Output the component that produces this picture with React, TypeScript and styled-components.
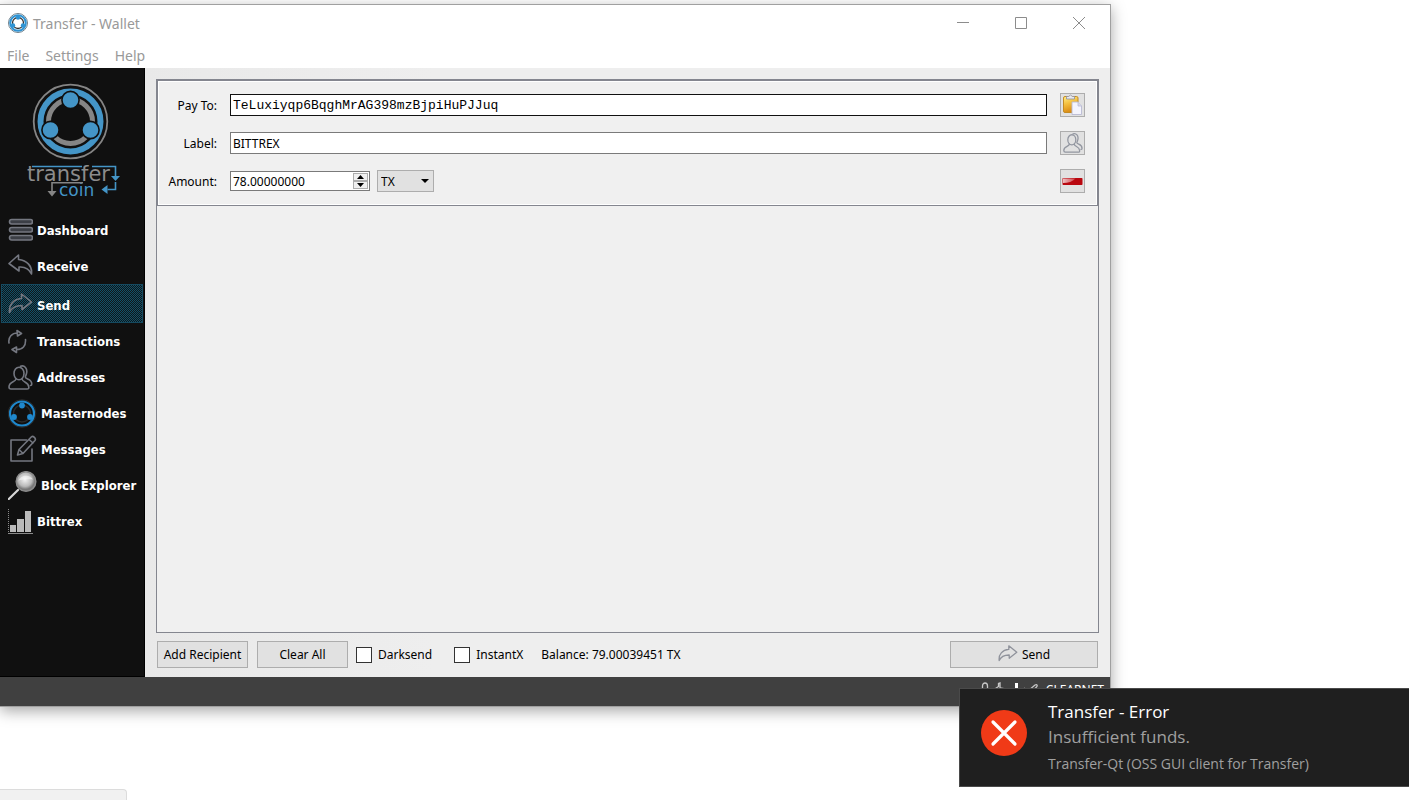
import React from "react";
import styled, { createGlobalStyle, css } from "styled-components";

const navFont = `"DejaVu Sans Condensed", "Noto Sans", sans-serif`;
const shellFont = `"Noto Sans", "Open Sans", sans-serif`;
const toastFont = `"Open Sans", "Noto Sans", sans-serif`;

const GlobalStyle = createGlobalStyle`
  *, *::before, *::after { box-sizing: border-box; }
  body { margin: 0; background: #fff; overflow: hidden; }
  button, input, select { font: inherit; color: inherit; margin: 0; }
`;

const Desktop = styled.div`
  position: relative;
  height: 100vh;
  padding-top: 4px;
  overflow: hidden;
  display: flex;
  flex-direction: column;
  justify-content: space-between;
  align-items: flex-start;
  font-family: ${shellFont};
  font-size: 12px;
  color: #000;
`;

const AppWindow = styled.div`
  width: calc(100% - 298px);
  height: calc(100vh - 97px);
  display: flex;
  flex-direction: column;
  border: 1px solid #a0a0a0;
  border-left: 0;
  background: #fff;
  box-shadow: 0 4px 14px rgba(0, 0, 0, 0.35);
`;

const TitleBar = styled.header`
  display: flex;
  align-items: center;
  height: 36px;
  flex: none;
  padding: 0 2px 0 8px;
  gap: 5px;
  font-size: 14px;
  color: #999;
`;

const WindowTitle = styled.h1`
  margin: 0;
  flex: 1;
  font-size: inherit;
  font-weight: 400;
`;

const CaptionButton = styled.button`
  width: 58px;
  height: 36px;
  padding: 0;
  border: 0;
  background: none;
  display: grid;
  place-items: center;
`;

const CaptionButtons = styled.div`
  display: flex;
`;

const MenuBar = styled.nav`
  display: flex;
  gap: 16px;
  height: 27px;
  flex: none;
  align-items: center;
  padding: 2px 0 0 7px;
  font-size: 14px;
`;

const MenuButton = styled.button`
  padding: 0;
  border: 0;
  background: none;
  color: #999;
`;

const Body = styled.div`
  flex: 1;
  min-height: 0;
  display: flex;
  background: #eee;
`;

const Sidebar = styled.aside`
  width: 145px;
  flex: none;
  background: #101010;
  border-right: 1px solid #000;
  border-bottom: 1px solid #000;
`;

const Brand = styled.div`
  height: 144px;
  svg { display: block; }
`;

const NavLink = styled.a<{ $active?: boolean }>`
  display: flex;
  align-items: center;
  height: ${(p) => (p.$active ? 39 : 36)}px;
  margin: 0 1px;
  padding-left: 7px;
  gap: 4px;
  font-family: ${navFont};
  font-size: 13px;
  font-weight: 700;
  color: #fff;
  text-decoration: none;
  white-space: nowrap;
  svg { flex: none; }
  ${(p) =>
    p.$active &&
    css`
      padding: 3px 0 0 6px;
      border: 1px solid #15495f;
      background: conic-gradient(#115069 25%, #101618 0 50%, #115069 0 75%, #101618 0) 0 0 / 2px 2px;
    `}
`;

const Main = styled.main`
  flex: 1;
  min-width: 0;
  display: flex;
  flex-direction: column;
  padding: 11px 11px 9px;
  background: linear-gradient(90deg, #e9e9e9, #eee 30%);
`;

const RecipientList = styled.section`
  flex: 1;
  min-height: 0;
  border: 1px solid #84868f;
  background: #f0f0f0;
`;

const Entry = styled.form`
  display: grid;
  grid-template-columns: 48px 1fr 25px;
  grid-auto-rows: 24px;
  gap: 14px 13px;
  padding: 12px 12px 12px 11px;
  align-items: center;
  border: 1px solid #84868f;
  box-shadow: inset 0 0 0 1px #fff;
`;

const FieldLabel = styled.label`
  justify-self: end;
  white-space: nowrap;
`;

const TextField = styled.input<{ $mono?: boolean }>`
  width: 100%;
  height: 22px;
  padding: 0 2px;
  border: 1px solid ${(p) => (p.$mono ? "#111" : "#7a7a7a")};
  border-radius: 0;
  outline: 0;
  background: #fff;
  ${(p) => p.$mono && `font-family: "Liberation Mono", monospace; font-size: 13px;`}
`;

const AmountRow = styled.div`
  display: flex;
  align-items: center;
  gap: 7px;
`;

const SpinBox = styled.div`
  display: flex;
  align-items: center;
  width: 140px;
  height: 20px;
  padding-right: 1px;
  border: 1px solid #7a7a7a;
  background: #fff;
`;

const SpinInput = styled.input`
  flex: 1;
  min-width: 0;
  height: 18px;
  padding: 0 2px;
  border: 0;
  outline: 0;
  background: none;
`;

const SpinButtons = styled.div`
  display: flex;
  flex-direction: column;
`;

const SpinButton = styled.button`
  width: 15px;
  height: 8px;
  padding: 0;
  border: 1px solid #adadad;
  background: #f0f0f0;
  display: grid;
  place-items: center;
`;

const UnitSelect = styled.span`
  position: relative;
  display: flex;
  align-items: center;
  select {
    appearance: none;
    width: 57px;
    height: 22px;
    padding: 0 3px;
    border: 1px solid #adadad;
    border-radius: 0;
    background: #e1e1e1;
  }
  svg {
    position: absolute;
    right: 5px;
    pointer-events: none;
  }
`;

const IconButton = styled.button`
  width: 25px;
  height: 24px;
  padding: 0;
  border: 1px solid #adadad;
  background: #e1e1e1;
  display: grid;
  place-items: center;
`;

const Actions = styled.div`
  display: flex;
  align-items: center;
  flex: none;
  padding: 8px 1px 0;
`;

const PushButton = styled.button<{ $wide?: boolean }>`
  width: ${(p) => (p.$wide ? 148 : 91)}px;
  height: 27px;
  margin-right: ${(p) => (p.$wide ? 0 : 9)}px;
  margin-left: ${(p) => (p.$wide ? "auto" : 0)};
  padding: 0;
  border: 1px solid #adadad;
  background: #e1e1e1;
  display: flex;
  align-items: center;
  justify-content: center;
  gap: 4px;
  white-space: nowrap;
`;

const Checks = styled.div`
  display: flex;
  gap: 22px;
  margin: 0 18px 0 -1px;
`;

const CheckLabel = styled.label`
  display: flex;
  align-items: center;
  gap: 6px;
  input {
    appearance: none;
    width: 16px;
    height: 16px;
    border: 1px solid #333;
    background: #fff;
  }
`;

const StatusBar = styled.footer`
  display: flex;
  align-items: center;
  justify-content: flex-end;
  gap: 6px;
  flex: none;
  height: 29px;
  padding: 0 6px 4px 0;
  background: #404040;
  color: #fff;
`;

const Toast = styled.aside`
  position: absolute;
  right: 0;
  bottom: 13px;
  width: 450px;
  height: 99px;
  display: flex;
  gap: 21px;
  padding: 10px 0 0 21px;
  border: 1px solid #4a4a4a;
  border-right: 0;
  background: #1f1f1f;
  font-family: ${toastFont};
  color: #a0a0a0;
  svg { flex: none; margin-top: 11px; }
`;

const ToastText = styled.div`
  p { margin: 0; white-space: nowrap; }
`;

const ToastLine = styled.p<{ $title?: boolean }>`
  font-size: 17px;
  line-height: 25px;
  color: ${(p) => (p.$title ? "#fff" : "#a0a0a0")};
`;

const ToastSource = styled.p`
  font-size: 14px;
  line-height: 29px;
`;

const HoverTab = styled.div`
  width: 127px;
  height: 11px;
  border: 1px solid #dcdcdc;
  border-width: 1px 1px 0 0;
  border-top-right-radius: 4px;
  background: #f1f1f1;
`;

const ringNodes = [
  [0, -21.5],
  [-20, 8.5],
  [20, 8.5],
];

const BrandLogo = () => (
  <svg width="144" height="144" viewBox="0 68 144 144" role="img" aria-label="transfer coin">
    <g transform="translate(70.500 121.500)" fill="none">
      <circle r="36.800" stroke="#858585" strokeWidth="1.800" />
      <circle r="30" stroke="#4495c7" strokeWidth="6" />
      <circle r="22" stroke="#858585" strokeWidth="5" />
      {ringNodes.map(([x, y]) => (
        <circle key={x} cx={x} cy={y} r="8.600" fill="#4495c7" stroke="#101010" strokeWidth="1.600" />
      ))}
    </g>
    <text x="27" y="181" fontFamily="DejaVu Sans" fontSize="21" fill="#8c8c8c">transfer</text>
    <text x="59" y="196" fontFamily="DejaVu Sans" fontSize="17" fill="#4495c7">coin</text>
    <path d="M32 166.500H82M92 166.500H115.500V176" fill="none" stroke="#4495c7" strokeWidth="1.600" />
    <path d="M111 176h9l-4.500 5z" fill="#4495c7" />
    <path d="M115.500 182v7.500h-8" fill="none" stroke="#4495c7" strokeWidth="1.600" />
    <path d="M107.500 185v9l-6-4.500z" fill="#4495c7" />
    <path d="M83 182.700H52v9" fill="none" stroke="#858585" strokeWidth="1.600" />
    <path d="M47.500 191h9l-4.500 5.500z" fill="#858585" />
  </svg>
);

const line = {
  fill: "none",
  stroke: "#747780",
  strokeWidth: 1.6,
  strokeLinejoin: "round" as const,
  strokeLinecap: "round" as const,
};

const DashboardIcon = () => (
  <svg width="25" height="24" viewBox="0 0 25 24" {...line}>
    {[1.5, 9.5, 17.5].map((y) => (
      <rect key={y} x="1.500" y={y} width="23" height="4.500" rx="2.200" fill="#3c3f46" />
    ))}
  </svg>
);

const ForwardArrow = ({ size = 25 }: { size?: number }) => (
  <svg width={size} height={size} viewBox="0 0 25 25" {...line} stroke={size < 25 ? "#8f929b" : "#747780"}>
    <path d="M13.500 1L23.500 9L14 16.500V12.500C8 12.500 3.500 14.500 1.500 19.500C0.500 12 5.500 6 13.500 5.500Z" />
  </svg>
);

const BackArrow = () => (
  <svg width="25" height="25" viewBox="0 0 25 25" {...line}>
    <path d="M10.500 1L1 9.500L11 17V13C17 12.500 21 14.500 23.500 20C24.500 12 19 6.500 10.500 5.500Z" />
  </svg>
);

const CycleIcon = () => (
  <svg width="25" height="25" viewBox="0 0 25 25" {...line}>
    <path d="M1 14C0 8 4 4 9.500 4M9 1.500L13.500 4.500L9.500 7ZM17.500 10.500C18 17 14.500 20.500 9 20.500M8.500 18L4 20.500L8.500 23.500Z" />
  </svg>
);

const PeopleIcon = ({ size = 25, color = "#747780" }: { size?: number; color?: string }) => (
  <svg width={size} height={size} viewBox="0 0 25 25" {...line} stroke={color}>
    <ellipse cx="11" cy="8.500" rx="5" ry="6.300" />
    <path d="M8 14C7.500 17.500 1 16 1 22C1 23.500 1.500 24 3 24H19C20.500 24 21 23.500 20.800 22C20.500 16.500 14.500 17.500 14 14" />
    <path d="M12.500 1.200C16.500 -0.200 19.800 3.500 18.500 8.500C18.200 10 17.500 11 17.300 12C17.500 14.500 23.800 13.500 23.800 19C23.800 20 23.500 20.500 22.500 20.500" />
  </svg>
);

const MasternodeIcon = () => (
  <svg width="29" height="29" viewBox="0 0 29 29" fill="none">
    <circle cx="14" cy="14.500" r="13.800" stroke="#2d2d2d" />
    <circle cx="14" cy="14.500" r="12" stroke="#1f88cd" strokeWidth="2.200" />
    <circle cx="14" cy="14.500" r="8.500" stroke="#2b2b2b" strokeWidth="1.500" />
    <circle cx="14" cy="6.500" r="2.900" fill="#1f88cd" />
    <circle cx="6" cy="18" r="2.900" fill="#1f88cd" />
    <circle cx="22" cy="18" r="2.900" fill="#1f88cd" />
  </svg>
);

const ComposeIcon = () => (
  <svg width="29" height="29" viewBox="0 0 29 29" {...line}>
    <path d="M18.500 5H3V26H24V14" />
    <path d="M9.500 20L11 14.500L23.500 1.800C25 0.500 28.500 3.500 27 5.500L15 18.500ZM21 4.500L25 8M11 14.500L15 18.500" />
  </svg>
);

const MagnifierIcon = () => (
  <svg width="29" height="29" viewBox="0 0 29 29">
    <defs>
      <radialGradient id="lens" cx="45%" cy="40%">
        <stop offset="0" stopColor="#f4f4f4" />
        <stop offset="0.700" stopColor="#b9b9b9" />
        <stop offset="1" stopColor="#777" />
      </radialGradient>
    </defs>
    <path d="M0.800 28L10 19" stroke="#d6d6d6" strokeWidth="2.200" strokeLinecap="round" />
    <circle cx="18" cy="10.500" r="9.800" fill="url(#lens)" stroke="#8b8b8b" strokeWidth="1.500" />
    <path d="M10.500 9.500C12.500 3.500 22.500 3 25 8.500C20.500 8 14.500 8.500 10.500 9.500Z" fill="#fff" opacity="0.500" />
  </svg>
);

const ChartIcon = () => (
  <svg width="25" height="27" viewBox="0 0 25 27">
    <path d="M0.500 1V25.500" stroke="#8a8a8a" strokeDasharray="1 1" />
    <path d="M0 25.500H25" stroke="#8a8a8a" />
    <path d="M2 17h6v7H2zM9 11h7v13H9zM17 3h6v21h-6z" fill="#bababa" />
  </svg>
);

const PasteIcon = () => (
  <svg width="21" height="22" viewBox="0 0 21 22">
    <defs>
      <linearGradient id="board" x2="0.300" y2="1">
        <stop offset="0" stopColor="#fff08a" />
        <stop offset="0.500" stopColor="#f3bd3d" />
        <stop offset="1" stopColor="#d98a14" />
      </linearGradient>
    </defs>
    <rect x="1.500" y="2.500" width="14.500" height="16" rx="1.500" fill="url(#board)" stroke="#c38b24" />
    <path d="M4.500 5V2.500H6.500Q8.500 -0.500 10.500 2.500H12.500V5Z" fill="#e8e8ee" stroke="#8b8fa0" strokeWidth="0.800" />
    <path d="M10 8H16L19.500 12V20.500H10Z" fill="#f4f4fd" stroke="#b9bad2" strokeWidth="0.900" />
    <path d="M16 8V12H19.500" fill="#d8d8ea" stroke="#b9bad2" strokeWidth="0.800" />
  </svg>
);

const RemoveIcon = () => (
  <svg width="21" height="9" viewBox="0 0 21 9">
    <defs>
      <linearGradient id="gloss">
        <stop offset="0" stopColor="#ecc0c2" />
        <stop offset="1" stopColor="#cf4248" />
      </linearGradient>
    </defs>
    <rect x="0.500" y="1" width="20" height="7" rx="0.800" fill="#b9070f" />
    <path d="M1 1.500H13.500Q9 6 1 6Z" fill="url(#gloss)" />
  </svg>
);

const Triangle = ({ up, w = 7, h = 4 }: { up?: boolean; w?: number; h?: number }) => (
  <svg width={w} height={h} viewBox={`0 0 ${w} ${h}`}>
    <path d={up ? `M0 ${h}L${w / 2} 0L${w} ${h}Z` : `M0 0H${w}L${w / 2} ${h}Z`} fill="#000" />
  </svg>
);

const StatusIcons = () => (
  <svg width="60" height="16" viewBox="0 0 60 16" fill="none" stroke="#c8c8c8" strokeWidth="1.300">
    <path d="M2.500 8V4C2.500 0 7.500 0 7.500 4V8M1 8h8v7H1z" />
    <path d="M14 7.500L18.500 4.500V1.500L20 1V6L23 6.500L19 13V9" />
    <path d="M32 15V10" strokeWidth="2.500" />
    <path d="M36.500 15V1" strokeWidth="3" stroke="#fff" />
    <path d="M44 6L48 9L55 3C57 2 58 3.500 56.500 5L49 13L43 8" />
  </svg>
);

const navItems = [
  { label: "Dashboard", icon: <DashboardIcon /> },
  { label: "Receive", icon: <BackArrow /> },
  { label: "Send", icon: <ForwardArrow />, active: true },
  { label: "Transactions", icon: <CycleIcon /> },
  { label: "Addresses", icon: <PeopleIcon /> },
  { label: "Masternodes", icon: <MasternodeIcon /> },
  { label: "Messages", icon: <ComposeIcon /> },
  { label: "Block Explorer", icon: <MagnifierIcon /> },
  { label: "Bittrex", icon: <ChartIcon /> },
];

export default function App() {
  return (
    <Desktop>
      <GlobalStyle />
      <AppWindow>
        <TitleBar>
          <svg width="20" height="20" viewBox="0 0 20 20" aria-hidden="true">
            <circle cx="10" cy="10" r="9.500" fill="#fff" stroke="#6f7f8a" />
            <circle cx="10" cy="10" r="7.800" fill="none" stroke="#2f93d3" strokeWidth="2" />
            <circle cx="10" cy="10" r="5.500" fill="#fff" stroke="#333" strokeWidth="1.300" />
            <circle cx="10" cy="4.500" r="2.200" fill="#2f93d3" />
            <circle cx="5" cy="12.500" r="2.200" fill="#2f93d3" />
            <circle cx="15" cy="12.500" r="2.200" fill="#2f93d3" />
          </svg>
          <WindowTitle>Transfer - Wallet</WindowTitle>
          <CaptionButtons>
            <CaptionButton aria-label="Minimize">
              <svg width="12" height="12" viewBox="0 0 12 12" stroke="#8c8c8c"><path d="M0 5.500H12" /></svg>
            </CaptionButton>
            <CaptionButton aria-label="Maximize">
              <svg width="12" height="12" viewBox="0 0 12 12" fill="none" stroke="#8c8c8c"><path d="M0.500 0.500H11.500V11.500H0.500Z" /></svg>
            </CaptionButton>
            <CaptionButton aria-label="Close">
              <svg width="12" height="12" viewBox="0 0 12 12" stroke="#8c8c8c"><path d="M0 0L12 12M12 0L0 12" /></svg>
            </CaptionButton>
          </CaptionButtons>
        </TitleBar>
        <MenuBar>
          <MenuButton>File</MenuButton>
          <MenuButton>Settings</MenuButton>
          <MenuButton>Help</MenuButton>
        </MenuBar>
        <Body>
          <Sidebar>
            <Brand><BrandLogo /></Brand>
            <nav>
              {navItems.map((item) => (
                <NavLink key={item.label} href="#" $active={item.active}>
                  {item.icon}
                  {item.label}
                </NavLink>
              ))}
            </nav>
          </Sidebar>
          <Main>
            <RecipientList>
              <Entry onSubmit={(e) => e.preventDefault()}>
                <FieldLabel htmlFor="payto">Pay To:</FieldLabel>
                <TextField id="payto" $mono spellCheck={false} defaultValue="TeLuxiyqp6BqghMrAG398mzBjpiHuPJJuq" />
                <IconButton type="button" aria-label="Paste address"><PasteIcon /></IconButton>
                <FieldLabel htmlFor="label">Label:</FieldLabel>
                <TextField id="label" spellCheck={false} defaultValue="BITTREX" />
                <IconButton type="button" aria-label="Choose from address book"><PeopleIcon size={20} color="#9296a0" /></IconButton>
                <FieldLabel htmlFor="amount">Amount:</FieldLabel>
                <AmountRow>
                  <SpinBox>
                    <SpinInput id="amount" defaultValue="78.00000000" />
                    <SpinButtons>
                      <SpinButton type="button" aria-label="Increase"><Triangle up /></SpinButton>
                      <SpinButton type="button" aria-label="Decrease"><Triangle /></SpinButton>
                    </SpinButtons>
                  </SpinBox>
                  <UnitSelect>
                    <select aria-label="Unit" defaultValue="TX"><option>TX</option></select>
                    <Triangle w={8} h={4} />
                  </UnitSelect>
                </AmountRow>
                <IconButton type="button" aria-label="Remove recipient"><RemoveIcon /></IconButton>
              </Entry>
            </RecipientList>
            <Actions>
              <PushButton type="button">Add Recipient</PushButton>
              <PushButton type="button">Clear All</PushButton>
              <Checks>
                <CheckLabel><input type="checkbox" />Darksend</CheckLabel>
                <CheckLabel><input type="checkbox" />InstantX</CheckLabel>
              </Checks>
              <span>Balance: 79.00039451 TX</span>
              <PushButton type="button" $wide><ForwardArrow size={20} />Send</PushButton>
            </Actions>
          </Main>
        </Body>
        <StatusBar>
          <StatusIcons />
          <span>CLEARNET</span>
        </StatusBar>
      </AppWindow>
      <HoverTab />
      <Toast role="alert">
        <svg width="46" height="46" viewBox="0 0 46 46">
          <circle cx="23" cy="23" r="23" fill="#f03a17" />
          <path d="M12 12L34 34M34 12L12 34" stroke="#fff" strokeWidth="3.200" strokeLinecap="round" />
        </svg>
        <ToastText>
          <ToastLine $title>Transfer - Error</ToastLine>
          <ToastLine>Insufficient funds.</ToastLine>
          <ToastSource>Transfer-Qt (OSS GUI client for Transfer)</ToastSource>
        </ToastText>
      </Toast>
    </Desktop>
  );
}
